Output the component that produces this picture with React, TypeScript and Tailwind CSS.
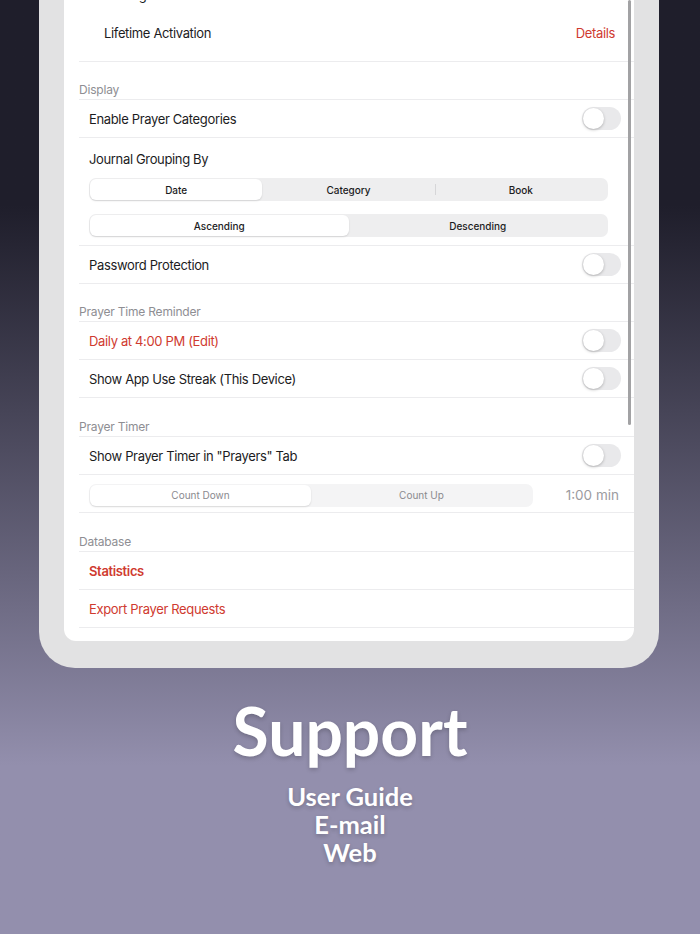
import React from 'react';

// Settings screen inside an iPad frame, "Support" caption below

const Toggle: React.FC = () => (
  <div className="w-[39px] h-[23px] rounded-full bg-[#e9e9eb] p-[1px] flex items-center">
    <div className="w-[21px] h-[21px] rounded-full bg-white shadow-[0_1px_3px_rgba(0,0,0,0.25)]" />
  </div>
);

const SectionHeader: React.FC<{ title: string; tall?: boolean }> = ({ title, tall }) => (
  <div className={`${tall ? 'h-[39px]' : 'h-[38px]'} ml-[15px] border-b border-[#ececee] flex items-end pb-[2px]`}>
    <span className="text-[12px] leading-[14px] tracking-[-0.2px] text-[#8e8e93]">{title}</span>
  </div>
);

const Row: React.FC<{ label: string; red?: boolean; bold?: boolean; toggle?: boolean }> = ({ label, red, bold, toggle }) => (
  <div className="h-[38px] ml-[15px] border-b border-[#ececee] flex items-center justify-between pl-[10px] pr-[13px]">
    <span
      className={`text-[13px] leading-[16px] tracking-[-0.35px] ${red ? 'text-[#cf3a2f]' : 'text-[#1c1c1e]'} ${bold ? 'font-semibold' : ''}`}
    >
      {label}
    </span>
    {toggle && <Toggle />}
  </div>
);

const Segmented: React.FC<{ items: string[]; selected: number; muted?: boolean; dividers?: boolean }> = ({
  items,
  selected,
  muted,
  dividers,
}) => (
  <div className={`h-[23px] rounded-[7px] p-[1px] flex ${muted ? 'bg-[#f4f4f5]' : 'bg-[#eeeeef]'}`}>
    {items.map((item, i) => (
      <div key={item} className="flex-1 relative flex items-center justify-center">
        {i === selected && (
          <div className="absolute inset-0 rounded-[6px] bg-white shadow-[0_1px_2px_rgba(0,0,0,0.12)]" />
        )}
        {dividers && i > 0 && i !== selected && i - 1 !== selected && (
          <div className="absolute left-0 top-[5px] bottom-[5px] w-px bg-[#d6d6d8]" />
        )}
        <span
          className={`relative text-[10px] leading-[12px] ${muted ? 'text-[#8a8a8e]' : 'text-[#1c1c1e] font-medium'}`}
        >
          {item}
        </span>
      </div>
    ))}
  </div>
);

export default function App() {
  return (
    <div
      className="w-[700px] h-[934px] overflow-hidden bg-linear-to-b from-[#1f1e2b] from-[22%] to-[#938fad] to-[82%] font-['Inter','Liberation_Sans',sans-serif]"
    >
      {/* Device frame */}
      <div className="ml-[39px] w-[620px] bg-[#e2e2e3] rounded-b-[36px] px-[25px] pb-[27px]">
        <div className="relative w-[570px] bg-white rounded-b-[12px] pb-[13px] overflow-hidden">
          {/* scroll indicator */}
          <div className="absolute right-[3px] top-0 w-[3px] h-[425px] rounded-full bg-[#a2a2a4]" />

          {/* previous row, cut off */}
          <div className="h-[14px] overflow-hidden pl-[44px]">
            <div className="-mt-[13px] text-[13px] leading-[16px] tracking-[-0.35px] text-[#1c1c1e]">Storage</div>
          </div>
          <div className="h-[48px] ml-[15px] border-b border-[#ececee] flex items-start justify-between pt-[11px] pl-[25px] pr-[19px]">
            <span className="text-[13px] leading-[16px] tracking-[-0.35px] text-[#1c1c1e]">Lifetime Activation</span>
            <span className="text-[13px] leading-[16px] tracking-[-0.35px] text-[#cf3a2f]">Details</span>
          </div>

          <SectionHeader title="Display" />
          <Row label="Enable Prayer Categories" toggle />
          <div className="ml-[15px] border-b border-[#ececee] pl-[10px] pr-[26px] pt-[13px] pb-[8px]">
            <div className="text-[13px] leading-[16px] tracking-[-0.35px] text-[#1c1c1e]">Journal Grouping By</div>
            <div className="mt-[11px]">
              <Segmented items={['Date', 'Category', 'Book']} selected={0} dividers />
            </div>
            <div className="mt-[13px]">
              <Segmented items={['Ascending', 'Descending']} selected={0} />
            </div>
          </div>
          <Row label="Password Protection" toggle />

          <SectionHeader title="Prayer Time Reminder" />
          <Row label="Daily at 4:00 PM (Edit)" red toggle />
          <Row label="Show App Use Streak (This Device)" toggle />

          <SectionHeader title="Prayer Timer" tall />
          <Row label={'Show Prayer Timer in "Prayers" Tab'} toggle />
          <div className="h-[38px] ml-[15px] border-b border-[#ececee] flex items-center pl-[10px] pr-[15px] pt-[3px]">
            <div className="w-[444px]">
              <Segmented items={['Count Down', 'Count Up']} selected={0} muted />
            </div>
            <span className="ml-auto text-[13.5px] leading-[16px] text-[#9b9b9f]">1:00 min</span>
          </div>

          <SectionHeader title="Database" tall />
          <Row label="Statistics" red bold />
          <Row label="Export Prayer Requests" red />
        </div>
      </div>

      {/* Caption */}
      <div className="flex flex-col items-center text-white font-['Lato','Open_Sans',sans-serif] font-bold [text-shadow:0_2px_4px_rgba(0,0,0,0.2)]">
        <div className="mt-[25px] text-[66px] leading-[76px]">Support</div>
        <div className="mt-[13px] text-[25.5px] leading-[28px] text-center">
          <div>User Guide</div>
          <div>E-mail</div>
          <div>Web</div>
        </div>
      </div>
    </div>
  );
}
